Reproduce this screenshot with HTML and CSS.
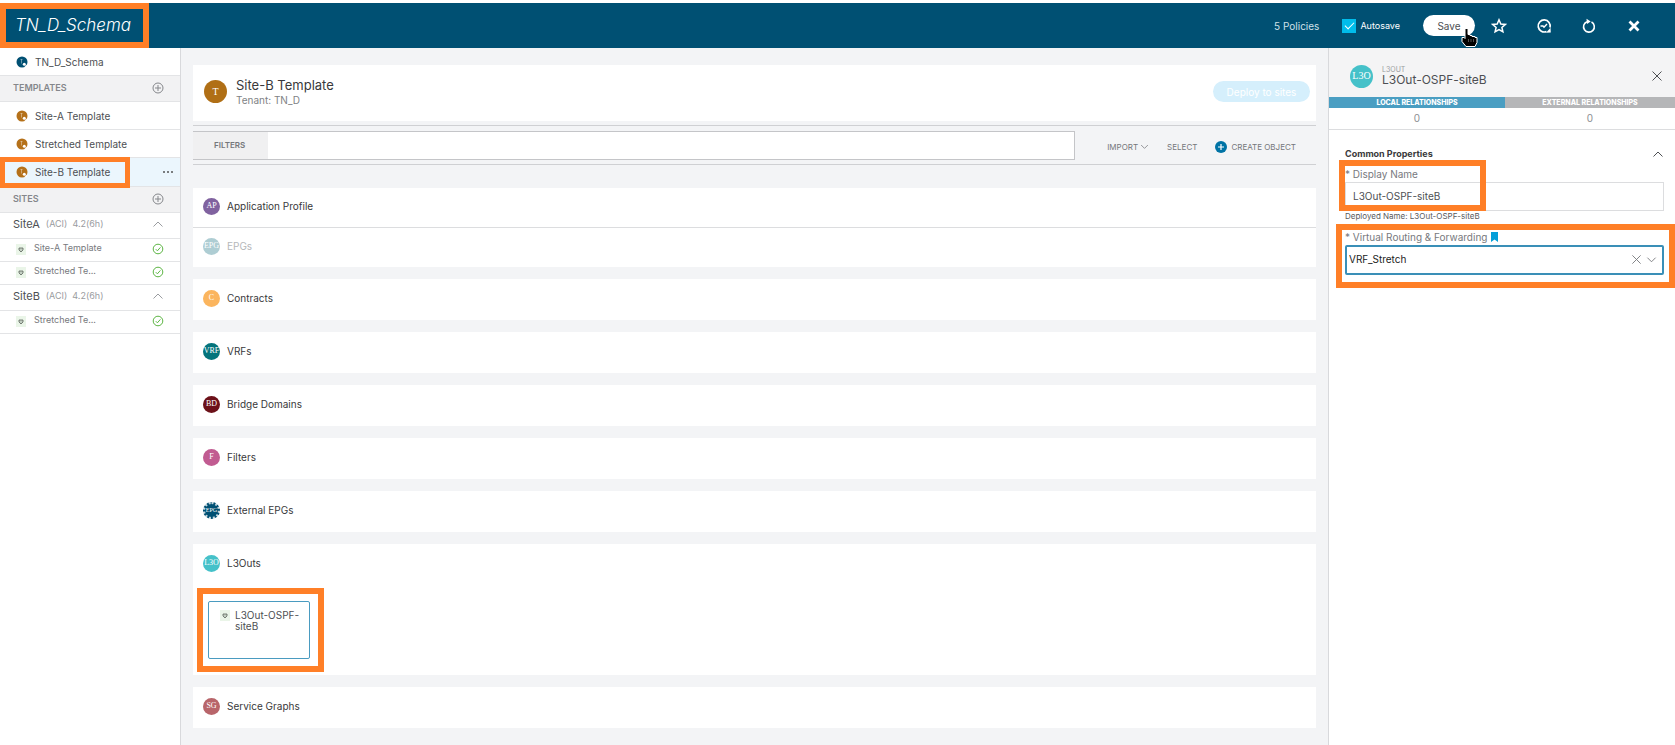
FILE: index.html
```html
<!DOCTYPE html>
<html lang="en">
<head>
<meta charset="utf-8">
<title>TN_D_Schema</title>
<link rel="stylesheet" href="styles.css">
</head>
<body>
<svg class="defs" aria-hidden="true">
  <symbol id="plus-circle" viewBox="0 0 12 12"><circle cx="6" cy="6" r="5" fill="none" stroke="currentColor"/><path d="M6 3v6M3 6h6" stroke="currentColor"/></symbol>
  <symbol id="check" viewBox="0 0 12 12"><circle cx="6" cy="6" r="4.8" fill="none" stroke="#5cb543"/><path d="M3.8 6.2l1.6 1.6 3-3.4" fill="none" stroke="#5cb543"/></symbol>
  <symbol id="up" viewBox="0 0 12 12"><path d="M1.5 8.5L6 4l4.500 4.500" fill="none" stroke="currentColor"/></symbol>
  <symbol id="down" viewBox="0 0 12 12"><path d="M1.500 4L6 8.500 10.500 4" fill="none" stroke="currentColor"/></symbol>
  <symbol id="cross" viewBox="0 0 12 12"><path d="M1.500 1.500l9 9M10.500 1.500l-9 9" fill="none" stroke="currentColor"/></symbol>
  <symbol id="shield" viewBox="0 0 10 11"><rect width="10" height="11" fill="#eaf5e8"/><path d="M3 4h4v2L5 8 3 6z" fill="#c3cfc2" stroke="#5d665d" stroke-width=".8"/></symbol>
  <symbol id="node" viewBox="0 0 12 12"><circle cx="6" cy="6" r="5.500" fill="currentColor"/><path d="M4.500 3.500h2M5.500 3.500v4" stroke="#fff" stroke-opacity=".5" stroke-width=".8"/><circle cx="8.300" cy="8.300" r="1.500" fill="#fff"/><path d="M8.500 10l2 1.500 1-2.500z" fill="#fff"/></symbol>
</svg>
<header class="topbar">
  <h1 class="schema-title marked">TN_D_Schema</h1>
  <div class="actions">
    <span class="policies">5 Policies</span>
    <label class="autosave"><input type="checkbox" checked>Autosave</label>
    <button class="save">Save
      <svg class="hand" viewBox="0 0 17 20"><path d="M4 1.500h3v6h2v1h2v1h3v1h2v5l-2 4H5l-4-5v-4h2l1 1z" fill="#000" stroke="#fff"/><path d="M7.500 12v3M10 12v3M12.500 12v3" stroke="#777" stroke-width=".7"/></svg>
    </button>
    <button class="icon" aria-label="Favorite"><svg viewBox="0 0 16 16"><path d="M8 1.800l1.800 4.200 4.500.4-3.400 3 1 4.400L8 11.500l-3.900 2.300 1-4.400-3.400-3 4.500-.4z" fill="none" stroke="#fff" stroke-width="1.500"/></svg></button>
    <button class="icon" aria-label="History"><svg viewBox="0 0 16 16"><path d="M14 9.500A6 6 0 1 0 10.500 13.500" fill="none" stroke="#fff" stroke-width="1.700"/><path d="M10 14.800l4.800-.3-.3-4.700z" fill="#fff"/><path d="M4.500 8h2.500l1 1.200L11 6" fill="none" stroke="#fff" stroke-width="1.400"/></svg></button>
    <button class="icon" aria-label="Refresh"><svg viewBox="0 0 16 16"><path d="M10.500 4A5.400 5.400 0 1 1 6 3.700" fill="none" stroke="#fff" stroke-width="1.600"/><path d="M5.500.8l4.200 2.600L6 6z" fill="#fff"/></svg></button>
    <button class="icon" aria-label="Close"><svg viewBox="0 0 16 16"><path d="M3.500 3.500l9 9M12.500 3.500l-9 9" stroke="#fff" stroke-width="2.800"/></svg></button>
  </div>
</header>
<div class="body">
  <nav class="sidebar">
    <a class="row root" href="#"><svg class="node teal"><use href="#node"/></svg>TN_D_Schema</a>
    <div class="row section"><h2>TEMPLATES</h2><button aria-label="Add template"><svg><use href="#plus-circle"/></svg></button></div>
    <a class="row" href="#"><svg class="node"><use href="#node"/></svg>Site-A Template</a>
    <a class="row" href="#"><svg class="node"><use href="#node"/></svg>Stretched Template</a>
    <div class="row active"><a class="marked" href="#"><svg class="node"><use href="#node"/></svg>Site-B Template</a><button aria-label="More"><svg><path d="M1 6h2M5 6h2M9 6h2" stroke="#555" stroke-width="1.500"/></svg></button></div>
    <div class="row section"><h2>SITES</h2><button aria-label="Add site"><svg><use href="#plus-circle"/></svg></button></div>
    <div class="row site"><h3>SiteA</h3><span>(ACI)&nbsp; 4.2(6h)</span><button aria-label="Collapse SiteA"><svg><use href="#up"/></svg></button></div>
    <a class="row child" href="#"><svg class="shield"><use href="#shield"/></svg><span>Site-A Template</span><svg><use href="#check"/></svg></a>
    <a class="row child" href="#"><svg class="shield"><use href="#shield"/></svg><span>Stretched Te...</span><svg><use href="#check"/></svg></a>
    <div class="row site"><h3>SiteB</h3><span>(ACI)&nbsp; 4.2(6h)</span><button aria-label="Collapse SiteB"><svg><use href="#up"/></svg></button></div>
    <a class="row child" href="#"><svg class="shield"><use href="#shield"/></svg><span>Stretched Te...</span><svg><use href="#check"/></svg></a>
  </nav>
  <main class="main">
    <section class="template card">
      <span class="badge big tenant">T</span>
      <div><h2>Site-B Template</h2><p>Tenant: TN_D</p></div>
      <button class="deploy" disabled>Deploy to sites</button>
    </section>
    <div class="toolbar">
      <div class="filter"><label for="filter">FILTERS</label><input id="filter" type="text"></div>
      <button>IMPORT <svg><use href="#down"/></svg></button>
      <button>SELECT</button>
      <button class="create"><svg viewBox="0 0 12 12"><circle cx="6" cy="6" r="6" fill="#0073a5"/><path d="M6 3v6M3 6h6" stroke="#fff" stroke-width="1.200"/></svg>CREATE OBJECT</button>
    </div>
    <div class="groups">
      <section class="card">
        <div class="item first"><span class="badge ap">AP</span>Application Profile</div>
        <div class="item sub"><span class="badge epg">EPG</span>EPGs</div>
      </section>
      <section class="card item"><span class="badge contract">C</span>Contracts</section>
      <section class="card item"><span class="badge vrf">VRF</span>VRFs</section>
      <section class="card item"><span class="badge bd">BD</span>Bridge Domains</section>
      <section class="card item"><span class="badge flt">F</span>Filters</section>
      <section class="card item"><span class="badge ext">EPG</span>External EPGs</section>
      <section class="card">
        <div class="item"><span class="badge l3o">L3O</span>L3Outs</div>
        <div class="tiles"><button class="tile marked"><svg class="shield"><use href="#shield"/></svg><span>L3Out-OSPF-siteB</span></button></div>
      </section>
      <section class="card item"><span class="badge sg">SG</span>Service Graphs</section>
    </div>
  </main>
  <aside class="panel">
    <div class="panel-head">
      <span class="badge big l3o">L3O</span>
      <div><p>L3OUT</p><h2>L3Out-OSPF-siteB</h2></div>
      <button aria-label="Close panel"><svg><use href="#cross"/></svg></button>
    </div>
    <div class="relations">
      <div class="local"><h3>LOCAL RELATIONSHIPS</h3><p>0</p></div>
      <div><h3>EXTERNAL RELATIONSHIPS</h3><p>0</p></div>
    </div>
    <div class="props">
      <div class="props-title"><h3>Common Properties</h3><button aria-label="Collapse"><svg><use href="#up"/></svg></button></div>
      <div class="field name marked">
        <label for="name">* Display Name</label>
        <input id="name" type="text" value="L3Out-OSPF-siteB">
      </div>
      <p class="deployed">Deployed Name: L3Out-OSPF-siteB</p>
      <div class="field vrf-field marked">
        <label for="vrf">* Virtual Routing &amp; Forwarding <svg viewBox="0 0 8 10"><path d="M0 0h7v10L3.500 7.500 0 10z" fill="#049fd9"/></svg></label>
        <div class="combo">
          <select id="vrf"><option>VRF_Stretch</option></select>
          <button aria-label="Clear"><svg><use href="#cross"/></svg></button>
          <svg><use href="#down"/></svg>
        </div>
      </div>
    </div>
  </aside>
</div>
</body>
</html>
```
FILE: styles.css
```css
*, *::before, *::after { box-sizing: border-box; }
body { margin: 0; padding-top: 3px; min-height: 100vh; display: flex; flex-direction: column; font-family: Inter, "Liberation Sans", sans-serif; font-size: 10px; line-height: 12px; color: #4d4f53; background: #fff; }
h1, h2, h3, p { margin: 0; font-weight: 400; }
button { font: inherit; color: inherit; background: none; border: 0; padding: 0; display: flex; align-items: center; }
a { color: inherit; text-decoration: none; }
svg { width: 12px; height: 12px; flex: none; display: block; }
.defs { position: absolute; width: 0; height: 0; }

/* orange callout frames */
.marked { position: relative; }
.marked::after { content: ""; position: absolute; border: 6px solid #ff7f27; pointer-events: none; z-index: 2; }

.topbar { display: flex; justify-content: space-between; height: 45px; background: #005073; color: #fff; }
.schema-title { width: 149px; padding-left: 15px; font-size: 17px; line-height: 44px; font-style: italic; font-weight: 300; }
.schema-title::after { inset: 0; }
.actions { display: flex; align-items: center; gap: 29px; padding-right: 33px; }
.policies { color: #cfe0e8; }
.autosave { display: flex; align-items: center; gap: 4px; margin: 0 -6px; font-size: 9px; }
.autosave input { appearance: none; width: 14px; height: 14px; margin: 0; background: #00bceb; display: grid; place-items: center; }
.autosave input::before { content: ""; width: 9px; height: 5px; border: solid #fff; border-width: 0 0 1px 1px; transform: translateY(-1px) rotate(-45deg); }
.save { position: relative; width: 52px; height: 21px; justify-content: center; border-radius: 11px; background: #fff; color: #4d4f53; margin-right: -13px; }
.hand { position: absolute; left: 38px; top: 12px; width: 17px; height: 20px; }
.icon svg { width: 16px; height: 16px; }

.body { flex: 1; display: grid; grid-template-columns: 181px 1fr 347px; }
.sidebar { border-right: 1px solid #d8d9dc; }
.row { display: flex; align-items: center; height: 28px; padding: 0 16px; border-bottom: 1px solid #e3e4e6; }
.node { margin-right: 7px; color: #b5711a; }
.node.teal { color: #005073; }
.section { height: 26px; padding: 0 16px 2px 13px; justify-content: space-between; background: #f2f2f3; color: #85878b; }
.section h2 { font-size: 9px; font-weight: 600; }
.active { height: 29px; background: #ebf6fd; padding-right: 6px; justify-content: space-between; }
.active a { display: flex; align-items: center; height: 28px; width: 114px; }
.active a::after { inset: -1px 0 -2px -16px; border-width: 5px; }
.site { height: 26px; padding: 0 16px 3px 13px; color: #9a9ca0; }
.site h3 { font-size: 11px; color: #4d4f53; margin-right: 6px; }
.site span { font-size: 9px; flex: 1; }
.child { height: 23px; padding-bottom: 2px; font-size: 9px; color: #77797d; }
.child span { flex: 1; padding-bottom: 3px; }
.shield { width: 10px; height: 11px; margin-right: 8px; }

.main { background: #f3f4f6; padding: 17px 12px 16px; }
.card { background: #fff; }
.badge { display: grid; place-items: center; flex: none; width: 17px; height: 17px; border-radius: 50%; color: #fff; font-family: "Liberation Serif", serif; font-size: 8px; line-height: 8px; overflow: hidden; }
.big { width: 23px; height: 23px; font-size: 10px; }
.tenant { background: #b06f15; }
.ap { background: #80629f; }
.epg { background: #aecdd3; }
.contract { background: #fbb55e; }
.vrf { background: #04747c; }
.bd { background: #6c1119; }
.flt { background: #c15b91; }
.ext { background: #005073; border: 2px dotted #c4d6de; font-size: 6px; }
.l3o { background: #45c1c9; }
.sg { background: #b8656a; }
.template { display: flex; align-items: center; gap: 9px; height: 56px; padding: 0 6px 3px 11px; }
.template h2 { font-size: 13px; line-height: 16px; color: #39393b; }
.template p { color: #808285; line-height: 14px; }
.deploy { margin-left: auto; width: 97px; height: 21px; justify-content: center; border-radius: 11px; background: #d5effc; color: #fff; font-size: 10px; }
.toolbar { display: flex; align-items: center; gap: 18px; height: 40px; margin-top: 4px; padding-right: 20px; border: solid #cfd0d3; border-width: 1px 0; font-size: 8px; color: #75777b; }
.toolbar button { gap: 2px; padding-top: 3px; }
.toolbar svg { width: 9px; height: 9px; }
.toolbar .create { gap: 4px; }
.toolbar .create svg { width: 12px; height: 12px; }
.filter { flex: 1; display: flex; height: 29px; margin-right: 14px; border: 1px solid #c4c5c8; border-left: 0; background: #fff; }
.filter label { width: 75px; padding: 7px 0 0 21px; background: #f0f0f1; font-weight: 600; }
.filter input { flex: 1; border: 0; background: none; font: inherit; }
.groups { display: grid; gap: 12px; margin-top: 23px; }
.item { display: flex; align-items: center; gap: 7px; height: 41px; padding: 0 10px 3px; color: #39393b; }
.first { height: 39px; }
.sub { height: 40px; border-top: 1px solid #dcdddf; color: #b5b7ba; }
.epg { color: #fff; }
.tiles { height: 90px; padding: 16px 15px; }
.tile { width: 102px; height: 58px; padding: 8px 8px 0 11px; align-items: flex-start; border: 1px solid #4a9bc0; border-radius: 2px; text-align: left; line-height: 11px; }
.tile span { width: 68px; }
.tile .shield { margin-right: 5px; }
.tile::after { inset: -14px -15px -14px -12px; }

.panel { border-left: 1px solid #d8d9dc; }
.panel-head { display: flex; align-items: center; gap: 9px; height: 49px; padding: 7px 12px 0 21px; background: #f4f4f5; }
.panel-head p { font-size: 7px; line-height: 7px; color: #9a9ca0; }
.panel-head h2 { font-size: 12px; line-height: 13px; }
.panel-head button { margin-left: auto; }
.relations { display: grid; grid-template-columns: 176px 1fr; border-bottom: 1px solid #dcdddf; text-align: center; }
.relations h3 { font-size: 7px; line-height: 11px; font-weight: 800; color: #fff; background: #b5b6b8; }
.relations .local h3 { background: #4a9ec2; }
.relations p { line-height: 21px; color: #8c8e92; }
.props { padding: 16px 11px 0 16px; }
.props-title { display: flex; justify-content: space-between; align-items: center; height: 16px; }
.props-title h3 { font-size: 9px; font-weight: 700; color: #39393b; }
.field label { display: flex; align-items: center; gap: 4px; height: 20px; color: #77797d; }
.name label { padding-top: 4px; }
.field input { display: block; width: 100%; height: 29px; border: 1px solid #dcdddf; padding: 0 7px 2px; font: inherit; color: #4d4f53; }
.name::after { left: -6px; top: -2px; bottom: 0; width: 147px; }
.deployed { font-size: 8px; line-height: 11px; color: #58595b; }
.vrf-field { margin-top: 6px; }
.vrf-field label { height: 17px; }
.vrf-field::after { inset: -4px -11px -13px -9px; }
.vrf-field label svg { width: 8px; height: 10px; }
.combo { display: flex; align-items: center; height: 30px; border: 2px solid #3a8fb7; border-radius: 2px; padding: 0 5px 2px 2px; }
.combo select { flex: 1; appearance: none; border: 0; padding: 0; background: none; font: inherit; color: #222; }
.combo svg { width: 11px; height: 11px; margin-left: 4px; color: #77797d; }
```
